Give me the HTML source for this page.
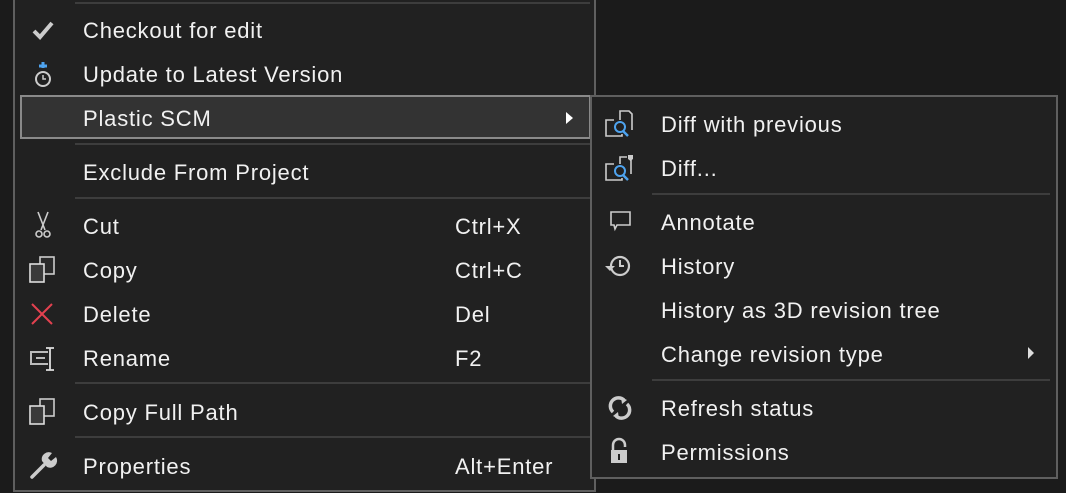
<!DOCTYPE html>
<html><head><meta charset="utf-8"><style>
html,body{margin:0;padding:0;}
body{width:1066px;height:493px;background:#1b1b1b;position:relative;overflow:hidden;font-family:"Liberation Sans",sans-serif;font-size:22px;letter-spacing:0.8px;color:#f1f1f1;}
.menu{position:absolute;background:#212121;border:2px solid #5f5f5f;box-sizing:border-box;}
.t{position:absolute;line-height:24px;white-space:nowrap;}
.sep{position:absolute;height:2px;background:#3d3d3d;}
.ic{position:absolute;}
</style></head><body>
<div class="menu" style="left:13px;top:-4px;width:583px;height:496px;"></div>
<div class="sep" style="left:75px;top:2px;width:515px;"></div>
<div style="position:absolute;left:20px;top:95px;width:571px;height:44px;background:#333;border:2px solid #8a8a8a;box-sizing:border-box;"></div>
<div class="sep" style="left:75px;top:143px;width:515px;"></div>
<div class="sep" style="left:75px;top:197px;width:515px;"></div>
<div class="sep" style="left:75px;top:382px;width:515px;"></div>
<div class="sep" style="left:75px;top:436px;width:515px;"></div>

<div class="t" style="left:83px;top:19px">Checkout for edit</div>
<div class="t" style="left:83px;top:63px">Update to Latest Version</div>
<div class="t" style="left:83px;top:107px">Plastic SCM</div>
<div class="t" style="left:83px;top:161px">Exclude From Project</div>
<div class="t" style="left:83px;top:215px">Cut</div><div class="t" style="left:455px;top:215px">Ctrl+X</div>
<div class="t" style="left:83px;top:259px">Copy</div><div class="t" style="left:455px;top:259px">Ctrl+C</div>
<div class="t" style="left:83px;top:303px">Delete</div><div class="t" style="left:455px;top:303px">Del</div>
<div class="t" style="left:83px;top:347px">Rename</div><div class="t" style="left:455px;top:347px">F2</div>
<div class="t" style="left:83px;top:401px">Copy Full Path</div>
<div class="t" style="left:83px;top:455px">Properties</div><div class="t" style="left:455px;top:455px">Alt+Enter</div>
<svg class="ic" style="left:565px;top:111px" width="10" height="14"><path d="M1 1L8 7L1 13Z" fill="#fff"/></svg>

<svg class="ic" style="left:30px;top:18px" width="26" height="26"><path d="M4 13L10 19L22 5" stroke="#ccc" stroke-width="4" fill="none"/></svg>
<svg class="ic" style="left:30px;top:60px" width="26" height="30"><path d="M13 2V8M9 6H17" stroke="#4ea3ee" stroke-width="3"/><circle cx="13" cy="19" r="7" stroke="#ccc" stroke-width="2" fill="none"/><path d="M13 15V19H16" stroke="#ccc" stroke-width="1.5" fill="none"/></svg>
<svg class="ic" style="left:30px;top:210px" width="26" height="30"><path d="M8 2L15 20M18 2L11 20" stroke="#ccc" stroke-width="1.6"/><circle cx="9" cy="24" r="3" stroke="#ccc" stroke-width="1.6" fill="none"/><circle cx="17" cy="24" r="3" stroke="#ccc" stroke-width="1.6" fill="none"/></svg>
<svg class="ic" style="left:28px;top:255px" width="30" height="30"><rect x="12" y="2" width="14" height="17" fill="#2a2a2a" stroke="#ccc" stroke-width="1.6"/><rect x="2" y="9" width="14" height="18" fill="#3a3a3a" stroke="#ddd" stroke-width="1.6"/></svg>
<svg class="ic" style="left:30px;top:302px" width="26" height="26"><path d="M2 2L22 22M22 2L2 22" stroke="#e3414f" stroke-width="2"/></svg>
<svg class="ic" style="left:28px;top:344px" width="30" height="30"><rect x="3" y="8" width="20" height="12" fill="none" stroke="#bbb" stroke-width="2"/><path d="M8 14H17" stroke="#bbb" stroke-width="2"/><rect x="20" y="6" width="4" height="18" fill="#212121"/><path d="M18 4H26M22 4V26M18 26H26" stroke="#ddd" stroke-width="1.8" fill="none"/></svg>
<svg class="ic" style="left:28px;top:397px" width="30" height="30"><rect x="12" y="2" width="14" height="17" fill="#2a2a2a" stroke="#ccc" stroke-width="1.6"/><rect x="2" y="9" width="14" height="18" fill="#3a3a3a" stroke="#ddd" stroke-width="1.6"/></svg>
<svg class="ic" style="left:28px;top:451px" width="30" height="30"><path d="M4 26L16 14" stroke="#ccc" stroke-width="3.5" stroke-linecap="round"/><path d="M14 10A7 7 0 0 1 24 2L20 7L23 10L28 6A7 7 0 0 1 19 16Z" fill="#ccc"/></svg>

<div class="menu" style="left:590px;top:95px;width:468px;height:384px;"></div>
<div class="sep" style="left:652px;top:193px;width:398px;"></div>
<div class="sep" style="left:652px;top:379px;width:398px;"></div>
<div class="t" style="left:661px;top:113px">Diff with previous</div>
<div class="t" style="left:661px;top:157px">Diff...</div>
<div class="t" style="left:661px;top:211px">Annotate</div>
<div class="t" style="left:661px;top:255px">History</div>
<div class="t" style="left:661px;top:299px">History as 3D revision tree</div>
<div class="t" style="left:661px;top:343px">Change revision type</div>
<div class="t" style="left:661px;top:397px">Refresh status</div>
<div class="t" style="left:661px;top:441px">Permissions</div>
<svg class="ic" style="left:1027px;top:346px" width="10" height="14"><path d="M1 1L7 7L1 13Z" fill="#ddd"/></svg>

<svg class="ic" style="left:604px;top:108px" width="32" height="32"><path d="M16 12V3H25L28 6V22" stroke="#ccc" stroke-width="1.6" fill="none"/><path d="M10 12H2V28H18V26" stroke="#ccc" stroke-width="1.6" fill="none"/><circle cx="16" cy="19" r="5" stroke="#4ea3ee" stroke-width="2" fill="none"/><path d="M19 23L24 28" stroke="#4ea3ee" stroke-width="2.5"/></svg>
<svg class="ic" style="left:604px;top:152px" width="32" height="32"><path d="M16 12V5H23M27 8V22" stroke="#ccc" stroke-width="1.6" fill="none"/><path d="M24 3H29V7L26.5 9L24 7Z" fill="#ccc"/><path d="M10 12H2V28H18V26" stroke="#ccc" stroke-width="1.6" fill="none"/><circle cx="16" cy="19" r="5" stroke="#4ea3ee" stroke-width="2" fill="none"/><path d="M19 23L24 28" stroke="#4ea3ee" stroke-width="2.5"/></svg>
<svg class="ic" style="left:606px;top:208px" width="26" height="26"><path d="M5 4H24V17H11L9 21L8 17H5Z" stroke="#ccc" stroke-width="1.6" fill="none"/></svg>
<svg class="ic" style="left:603px;top:252px" width="32" height="30"><circle cx="17" cy="14" r="9" stroke="#ccc" stroke-width="2.2" fill="none"/><path d="M17 8V14H21" stroke="#ccc" stroke-width="2" fill="none"/><path d="M2 14H12L7 19Z" fill="#ccc"/></svg>
<svg class="ic" style="left:606px;top:394px" width="28" height="28"><path d="M7 18A8 8 0 0 1 18 6" stroke="#ccc" stroke-width="3.5" fill="none"/><path d="M21 10A8 8 0 0 1 10 22" stroke="#ccc" stroke-width="3.5" fill="none"/><path d="M15 3L21 6L16 10Z" fill="#ccc"/><path d="M13 25L7 22L12 18Z" fill="#ccc"/></svg>
<svg class="ic" style="left:608px;top:437px" width="26" height="30"><path d="M5 13V8A6 6 0 0 1 17 8V10" stroke="#ccc" stroke-width="2.5" fill="none"/><rect x="3" y="13" width="16" height="13" fill="#ccc"/><rect x="10" y="17" width="2" height="6" fill="#212121"/></svg>
</body></html>
